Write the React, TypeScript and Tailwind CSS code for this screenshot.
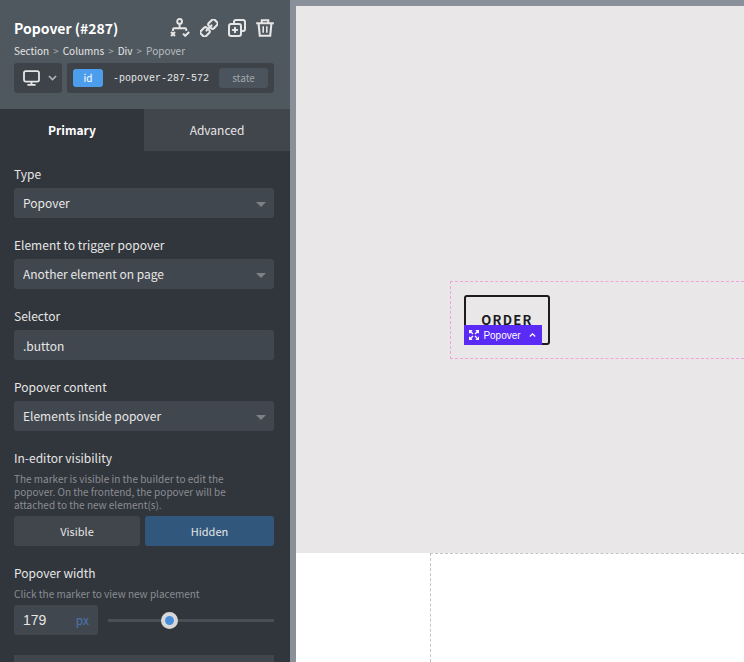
import React, { useState } from "react";

type IconProps = { className?: string };

function StructureIcon() {
  return (
    <svg
      className="h-[19px] w-5"
      viewBox="0 0 20 19"
      fill="none"
      stroke="currentColor"
      strokeWidth="1.9"
    >
      <circle cx="9.6" cy="3.4" r="2.4" />
      <path d="M9.6 5.8v4.4M3 13v-1.6q0-1.2 1.2-1.2h10.9q1.2 0 1.2 1.2V13" />
      <path
        d="M1 14l4 4M5 14l-4 4M13 15.6l2.2 2.2 4-3.8"
        strokeWidth="2"
      />
    </svg>
  );
}

function LinkIcon() {
  return (
    <svg
      className="h-[18px] w-[18px]"
      viewBox="0 0 18 18"
      fill="none"
      stroke="currentColor"
      strokeWidth="2.1"
      strokeLinecap="round"
    >
      <g transform="rotate(-45 9 9)">
        <path d="M7.6 7.4Q7.6 5.4 5.6 5.4H1.2Q-.8 5.4-.8 7.4v3.2q0 2 2 2h4.4q2 0 2-2" />
        <path d="M10.4 10.6q0 2 2 2h4.4q2 0 2-2V7.4q0-2-2-2h-4.4q-2 0-2 2" />
        <path d="M5.4 9h7.2" />
      </g>
    </svg>
  );
}

function DuplicateIcon() {
  return (
    <svg
      className="h-[18px] w-[18px]"
      viewBox="0 0 18 18"
      fill="none"
      stroke="currentColor"
      strokeWidth="2"
      strokeLinecap="round"
    >
      <rect x="1" y="5" width="12" height="12" rx="2.2" />
      <path d="M6 4.6V3Q6 1 8 1h7q2 0 2 2v7q0 2-2 2h-1.4M7 8.8v4.4M4.8 11h4.4" />
    </svg>
  );
}

function TrashIcon() {
  return (
    <svg
      className="h-[18px] w-[18px]"
      viewBox="0 0 18 18"
      fill="none"
      stroke="currentColor"
      strokeWidth="2.1"
    >
      <path d="M.2 4.2h17.6M5.8 4V1.2h6.4V4M2.6 4.6l1.2 12.2h10.4l1.2-12.2" />
      <path d="M7.2 7.2v6.6M10.8 7.2v6.6" strokeWidth="1.6" />
    </svg>
  );
}

function MonitorIcon() {
  return (
    <svg
      className="h-4 w-[17px]"
      viewBox="0 0 17 16"
      fill="none"
      stroke="currentColor"
      strokeWidth="1.8"
    >
      <rect x="1" y="1.2" width="15" height="10.4" rx="1.8" />
      <path d="M8.5 11.5v3M4.4 14.8h8.2" />
    </svg>
  );
}

function ChevronIcon({ className }: IconProps) {
  return (
    <svg
      className={className}
      viewBox="0 0 10 6"
      fill="none"
      stroke="currentColor"
      strokeWidth="1.8"
    >
      <path d="M1 .8l4 4 4-4" />
    </svg>
  );
}

function ExpandIcon() {
  return (
    <svg
      className="h-[10px] w-[10px]"
      viewBox="0 0 10 10"
      fill="none"
      stroke="currentColor"
      strokeWidth="1.3"
    >
      <path d="M.6 3.2V.6h2.6M6.8.6h2.6v2.6M9.4 6.8v2.6H6.8M3.2 9.4H.6V6.8M.8.8l3.2 3.2M9.2.8L6 4M9.2 9.2L6 6M.8 9.2L4 6" />
    </svg>
  );
}

type SelectFieldProps = {
  id: string;
  label: string;
  options: string[];
};

function SelectField({ id, label, options }: SelectFieldProps) {
  const [value, setValue] = useState(options[0]);

  return (
    <div>
      <label htmlFor={id} className="mb-1 block text-xs leading-5">
        {label}
      </label>
      <div className="relative">
        <select
          id={id}
          className="block h-[30px] w-full appearance-none rounded-[3px] bg-[#41474e] px-[9px] text-xs"
          value={value}
          onChange={(e) => setValue(e.target.value)}
        >
          {options.map((option) => (
            <option key={option}>{option}</option>
          ))}
        </select>
        <svg
          className="pointer-events-none absolute top-[14px] right-2 h-[5px] w-[10px]"
          viewBox="0 0 10 5"
          fill="#7d8186"
        >
          <path d="M0 0h10L5 5z" />
        </svg>
      </div>
    </div>
  );
}

function Header() {
  return (
    <header className="h-[109px] bg-[#50585f] pt-4 pr-4 pl-[14px] text-[#e6e6e6]">
      <div className="flex h-[23px] items-center justify-between">
        <h1 className="text-sm font-bold text-white">Popover (#287)</h1>
        <div className="flex items-center gap-[10px]">
          <button type="button" aria-label="Structure">
            <StructureIcon />
          </button>
          <button type="button" aria-label="Link">
            <LinkIcon />
          </button>
          <button type="button" aria-label="Duplicate">
            <DuplicateIcon />
          </button>
          <button type="button" aria-label="Delete">
            <TrashIcon />
          </button>
        </div>
      </div>
      <nav className="mt-1 flex h-4 items-center gap-1 text-[10px] leading-4">
        <a href="#section">Section</a>
        <span className="text-[#a9adb1]">&gt;</span>
        <a href="#columns">Columns</a>
        <span className="text-[#a9adb1]">&gt;</span>
        <a href="#div">Div</a>
        <span className="text-[#a9adb1]">&gt;</span>
        <span className="text-[#b9bdc0]">Popover</span>
      </nav>
      <div className="mt-1 flex gap-[5px]">
        <button
          type="button"
          aria-label="Breakpoint"
          className="flex h-[30px] w-12 items-center justify-end gap-2 rounded-[3px] bg-[#3d4349] pr-[5px]"
        >
          <MonitorIcon />
          <ChevronIcon className="h-[6px] w-[9px] text-[#b0b3b6]" />
        </button>
        <div className="flex h-[30px] flex-1 items-center justify-between rounded-[3px] bg-[#3d4349] px-[6px]">
          <button
            type="button"
            className="h-[18px] w-[30px] rounded-[3px] bg-[#4c9eed] text-[10px] leading-[18px] text-white"
          >
            id
          </button>
          <span className="font-['Liberation_Mono',monospace] text-[10px]">
            -popover-287-572
          </span>
          <button
            type="button"
            className="h-5 w-[49px] rounded-[3px] bg-[#4b545d] text-[10px] leading-5 text-[#a0a5a9]"
          >
            state
          </button>
        </div>
      </div>
    </header>
  );
}

function Sidebar() {
  const [selector, setSelector] = useState(".button");
  const [visibility, setVisibility] = useState("Hidden");
  const [width, setWidth] = useState("179");

  return (
    <aside className="h-screen w-[290px] shrink-0 overflow-hidden bg-[#31353c] font-['Noto_Sans_CJK_SC',sans-serif] text-[#e6e6e6]">
      <Header />
      <div className="flex h-[42px] text-xs">
        <button type="button" className="w-36 font-bold text-white">
          Primary
        </button>
        <button type="button" className="flex-1 bg-[#41454c]">
          Advanced
        </button>
      </div>
      <div className="flex flex-col gap-[17px] pt-[13px] pr-4 pl-[14px]">
        <SelectField id="type" label="Type" options={["Popover", "Tooltip"]} />
        <SelectField
          id="trigger"
          label="Element to trigger popover"
          options={["Another element on page", "Marker"]}
        />
        <div>
          <label htmlFor="selector" className="mb-1 block text-xs leading-5">
            Selector
          </label>
          <input
            type="text"
            id="selector"
            className="block h-[30px] w-full rounded-[3px] bg-[#41474e] px-[9px] text-xs"
            value={selector}
            onChange={(e) => setSelector(e.target.value)}
          />
        </div>
        <SelectField
          id="content"
          label="Popover content"
          options={["Elements inside popover", "Rich text"]}
        />
        <div>
          <h2 className="mb-1 text-xs leading-5">In-editor visibility</h2>
          <p className="mb-[5px] pr-6 text-[10px] leading-[13px] text-[#8b8e92]">
            The marker is visible in the builder to edit the popover. On the
            frontend, the popover will be attached to the new element(s).
          </p>
          <div className="grid grid-cols-[126px_1fr] gap-[5px]">
            {["Visible", "Hidden"].map((option) => (
              <button
                key={option}
                type="button"
                className={`h-[30px] rounded-[3px] text-[11px] ${
                  visibility === option ? "bg-[#31587c]" : "bg-[#41454c]"
                }`}
                onClick={() => setVisibility(option)}
              >
                {option}
              </button>
            ))}
          </div>
        </div>
        <div>
          <label htmlFor="width" className="mb-1 block text-xs leading-5">
            Popover width
          </label>
          <p className="mb-[5px] text-[10px] leading-[13px] text-[#8b8e92]">
            Click the marker to view new placement
          </p>
          <div className="flex items-center gap-[10px]">
            <div className="flex h-[30px] w-[84px] items-center justify-between rounded-[3px] bg-[#41474e] px-[9px]">
              <input
                type="text"
                id="width"
                className="w-10 font-['Liberation_Sans',sans-serif] text-sm"
                value={width}
                onChange={(e) => setWidth(e.target.value)}
              />
              <span className="text-xs text-[#4a75ad]">px</span>
            </div>
            <input
              type="range"
              aria-label="Popover width slider"
              min={0}
              max={500}
              value={width}
              onChange={(e) => setWidth(e.target.value)}
              className="h-[17px] min-w-0 flex-1 appearance-none bg-transparent [&::-webkit-slider-runnable-track]:h-[3px] [&::-webkit-slider-runnable-track]:bg-[#4b4f53] [&::-webkit-slider-thumb]:-mt-[7px] [&::-webkit-slider-thumb]:h-[17px] [&::-webkit-slider-thumb]:w-[17px] [&::-webkit-slider-thumb]:appearance-none [&::-webkit-slider-thumb]:rounded-full [&::-webkit-slider-thumb]:border-4 [&::-webkit-slider-thumb]:border-[#d8d8d8] [&::-webkit-slider-thumb]:bg-[#4a8edb]"
            />
          </div>
        </div>
      </div>
      <div className="mt-5 mr-4 ml-[14px] h-[30px] bg-[#41454c]" />
    </aside>
  );
}

function Canvas() {
  return (
    <main className="flex h-screen min-w-0 flex-1 flex-col overflow-hidden border-t-[6px] border-l-[6px] border-[#8a9099] bg-white">
      <section className="bg-[#e9e7e8] pt-[275px] pb-[194px] pl-[154px]">
        <div className="border border-r-0 border-dashed border-[#f0a5dc] p-[13px]">
          <div className="relative h-[50px] w-[86px]">
            <button
              type="button"
              className="h-full w-full rounded-[3px] border-2 border-[#1c1c1e] text-center font-['Noto_Sans_CJK_SC',sans-serif] text-[13px] font-bold tracking-widest text-[#1c1c1e]"
            >
              ORDER
            </button>
            <button
              type="button"
              className="absolute bottom-0 left-0 flex h-5 w-[78px] items-center justify-between bg-[#5a2bf5] pr-[6px] pl-[5px] font-['Liberation_Sans',sans-serif] text-[10px] text-white"
            >
              <ExpandIcon />
              <span>Popover</span>
              <ChevronIcon className="ml-1 h-1 w-[7px] rotate-180" />
            </button>
          </div>
        </div>
      </section>
      <section className="flex flex-1 pl-[134px]">
        <div className="flex-1 border-t border-l border-dashed border-[#c3c5c3]" />
      </section>
    </main>
  );
}

function App() {
  return (
    <div className="flex min-h-screen">
      <Sidebar />
      <Canvas />
    </div>
  );
}

export default App;
